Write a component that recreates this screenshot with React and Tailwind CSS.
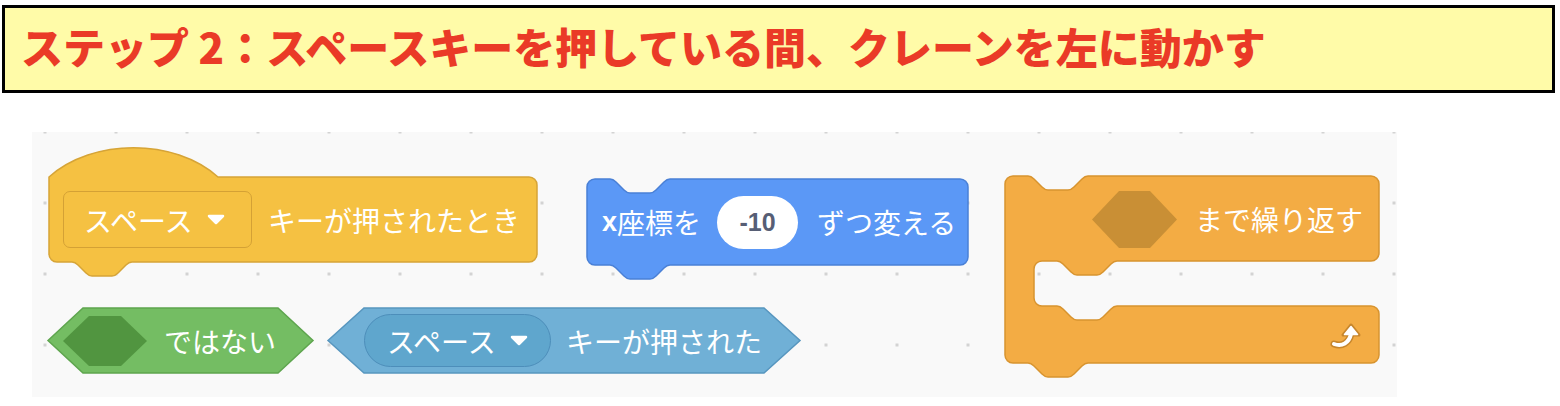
import React from 'react';

const jp = "font-['Noto_Sans_CJK_JP','Noto_Sans',sans-serif]";

// Scratch-like block outlines (pixel units)
const HAT =
  'M0,30 c44,-39 125,-39 169,0 H480 a8,8 0 0 1 8,8 V107 a8,8 0 0 1 -8,8 H83 c-2,0 -4,1 -6,3 l-8,8 c-2,2 -4,3 -6,3 H43 c-2,0 -4,-1 -6,-3 l-8,-8 c-2,-2 -4,-3 -6,-3 H8 a8,8 0 0 1 -8,-8 Z';

const MOTION =
  'M0,8 a8,8 0 0 1 8,-8 H23 c2,0 4,1 6,3 l8,8 c2,2 4,3 6,3 H63 c2,0 4,-1 6,-3 l8,-8 c2,-2 4,-3 6,-3 H373 a8,8 0 0 1 8,8 V78 a8,8 0 0 1 -8,8 H83 c-2,0 -4,1 -6,3 l-8,8 c-2,2 -4,3 -6,3 H43 c-2,0 -4,-1 -6,-3 l-8,-8 c-2,-2 -4,-3 -6,-3 H8 a8,8 0 0 1 -8,-8 Z';

const REPEAT =
  'M0,8 a8,8 0 0 1 8,-8 H23 c2,0 4,1 6,3 l8,8 c2,2 4,3 6,3 H63 c2,0 4,-1 6,-3 l8,-8 c2,-2 4,-3 6,-3 H366 a8,8 0 0 1 8,8 V77 a8,8 0 0 1 -8,8 H112 c-2,0 -4,1 -6,3 l-8,8 c-2,2 -4,3 -6,3 H72 c-2,0 -4,-1 -6,-3 l-8,-8 c-2,-2 -4,-3 -6,-3 H37 a8,8 0 0 0 -8,8 V122 a8,8 0 0 0 8,8 H52 c2,0 4,1 6,3 l8,8 c2,2 4,3 6,3 H92 c2,0 4,-1 6,-3 l8,-8 c2,-2 4,-3 6,-3 H366 a8,8 0 0 1 8,8 V179 a8,8 0 0 1 -8,8 H83 c-2,0 -4,1 -6,3 l-8,8 c-2,2 -4,3 -6,3 H43 c-2,0 -4,-1 -6,-3 l-8,-8 c-2,-2 -4,-3 -6,-3 H8 a8,8 0 0 1 -8,-8 Z';

function Shape({ w, h, children }) {
  return (
    <svg
      className="absolute left-0 top-0 overflow-visible"
      width={w}
      height={h}
      viewBox={`0 0 ${w} ${h}`}
    >
      {children}
    </svg>
  );
}

function Caret() {
  return (
    <svg width="18" height="11" viewBox="0 0 18 11" className="shrink-0">
      <path d="M2,2 H16 L9,9 Z" fill="white" stroke="white" strokeWidth="2.5" strokeLinejoin="round" />
    </svg>
  );
}

function HatBlock() {
  return (
    <div className="relative w-[488px] h-[130px] pt-[30px] shrink-0">
      <Shape w={488} h={130}>
        <path d={HAT} fill="#f5c142" stroke="#d6a437" strokeWidth="1.5" />
      </Shape>
      <div className="relative flex items-center h-[85px] pl-[14px]">
        <div className="flex items-center h-[57px] w-[189px] rounded-[7px] border-[1.5px] border-[#d4a135] pl-[20px] gap-[14px]">
          <span>スペース</span>
          <Caret />
        </div>
        <span className="ml-[16px]">キーが押されたとき</span>
      </div>
    </div>
  );
}

function MotionBlock() {
  return (
    <div className="relative w-[381px] h-[99px] shrink-0">
      <Shape w={381} h={99}>
        <path d={MOTION} fill="#5b98f6" stroke="#4a80d6" strokeWidth="1.5" />
      </Shape>
      <div className="relative flex items-center h-[86px] pl-[15px]">
        <span className="font-['Liberation_Sans',sans-serif] font-bold text-[27px]">x</span>
        <span>座標を</span>
        <div className="ml-[16px] w-[81px] h-[53px] rounded-full bg-white flex items-center justify-center font-['Liberation_Sans',sans-serif] font-bold text-[25px] text-[#575e75]">
          -10
        </div>
        <span className="ml-[19px]">ずつ変える</span>
      </div>
    </div>
  );
}

function RepeatBlock() {
  return (
    <div className="relative w-[374px] h-[201px] shrink-0">
      <Shape w={374} h={201}>
        <path d={REPEAT} fill="#f3ac44" stroke="#d8942f" strokeWidth="1.5" />
        <polygon points="87,43.5 114,15 145,15 172,43.5 145,72 114,72" fill="#c98f35" />
        <g transform="translate(326,147)">
          <path d="M3,21 C11,24 18,20 20,11" fill="none" stroke="#c7862c" strokeWidth="7" strokeLinecap="round" />
          <polygon points="12,12 28,12 20,2" fill="#c7862c" stroke="#c7862c" strokeWidth="3" strokeLinejoin="round" />
          <path d="M3,21 C11,24 18,20 20,11" fill="none" stroke="white" strokeWidth="4" strokeLinecap="round" />
          <polygon points="13.5,11.5 26.5,11.5 20,3.5" fill="white" stroke="white" strokeWidth="1.5" strokeLinejoin="round" />
        </g>
      </Shape>
      <div className="relative flex items-center h-[85px] pl-[190px]">
        <span>まで繰り返す</span>
      </div>
    </div>
  );
}

function NotBlock() {
  return (
    <div className="relative w-[265px] h-[65px] shrink-0">
      <Shape w={265} h={65}>
        <polygon points="0,32.5 35,0 230,0 265,32.5 230,65 35,65" fill="#74bd63" stroke="#5ea54e" strokeWidth="1.5" />
        <polygon points="15,33 41,8 73,8 99,33 73,58 41,58" fill="#519540" />
      </Shape>
      <div className="relative flex items-center h-full pl-[116px]">
        <span>ではない</span>
      </div>
    </div>
  );
}

function KeyPressedBlock() {
  return (
    <div className="relative w-[472px] h-[65px] shrink-0">
      <Shape w={472} h={65}>
        <polygon points="0,32.5 36,0 436,0 472,32.5 436,65 36,65" fill="#70b0d6" stroke="#5796bf" strokeWidth="1.5" />
      </Shape>
      <div className="relative flex items-center h-full pl-[36px]">
        <div className="flex items-center h-[53px] w-[187px] rounded-full bg-[#5fa6cd] border border-[#4d8eba] pl-[22px] gap-[14px]">
          <span>スペース</span>
          <Caret />
        </div>
        <span className="ml-[15px]">キーが押された</span>
      </div>
    </div>
  );
}

export default function App() {
  return (
    <div className="w-[1560px] h-[406px] bg-white overflow-hidden">
      <div className="ml-[2px] mt-[5px] w-[1553px] h-[88px] border-[3px] border-black bg-[#fffba8] flex items-center pl-[16px] pb-[6px]">
        <h1 className={`${jp} font-black text-[42px] leading-none text-[#ea3a27] whitespace-nowrap`}>
          ステップ 2：スペースキーを押している間、クレーンを左に動かす
        </h1>
      </div>

      <div
        className={`${jp} ml-[32px] mt-[39px] w-[1365px] h-[265px] bg-[#f9f9f9] bg-[radial-gradient(circle_at_center,#d3d3d3_1.4px,transparent_1.9px)] bg-[length:71px_71px] bg-[position:-22.5px_-35.5px] flex items-start pl-[16px] pt-[15px] text-white text-[28px] leading-none`}
      >
        <div className="flex flex-col">
          <div className="flex items-start">
            <div className="ml-[1px]">
              <HatBlock />
            </div>
            <div className="ml-[50px] mt-[32px]">
              <MotionBlock />
            </div>
          </div>
          <div className="flex mt-[30px]">
            <NotBlock />
            <div className="ml-[15px]">
              <KeyPressedBlock />
            </div>
          </div>
        </div>
        <div className="ml-[37px] mt-[29px]">
          <RepeatBlock />
        </div>
      </div>
    </div>
  );
}
